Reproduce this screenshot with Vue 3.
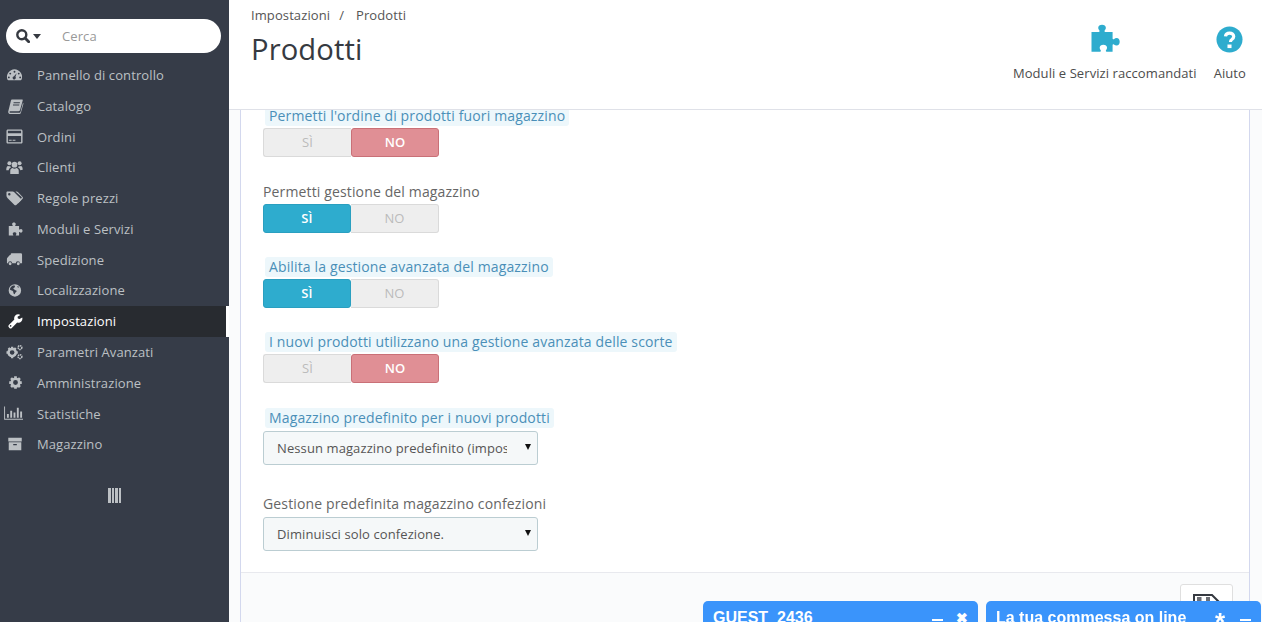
<script setup>
const menu = [
  { name: "Pannello di controllo", icon: "dash" },
  { name: "Catalogo", icon: "book" },
  { name: "Ordini", icon: "card" },
  { name: "Clienti", icon: "users" },
  { name: "Regole prezzi", icon: "tags" },
  { name: "Moduli e Servizi", icon: "puzzle" },
  { name: "Spedizione", icon: "truck" },
  { name: "Localizzazione", icon: "globe" },
  { name: "Impostazioni", icon: "wrench", active: true },
  { name: "Parametri Avanzati", icon: "cogs" },
  { name: "Amministrazione", icon: "cog" },
  { name: "Statistiche", icon: "chart" },
  { name: "Magazzino", icon: "archive" },
]

const fields = [
  { label: "Permetti l'ordine di prodotti fuori magazzino", hint: true, value: false },
  { label: "Permetti gestione del magazzino", value: true },
  { label: "Abilita la gestione avanzata del magazzino", hint: true, value: true },
  { label: "I nuovi prodotti utilizzano una gestione avanzata delle scorte", hint: true, value: false },
  { label: "Magazzino predefinito per i nuovi prodotti", hint: true, option: "Nessun magazzino predefinito (impostazione generale)" },
  { label: "Gestione predefinita magazzino confezioni", option: "Diminuisci solo confezione." },
]

const puzzle = "M2 6h5.500c.6 0 .8-.5.5-1-.5-.7-.9-1.300-.9-2.100C7.100 1.400 8.400.5 10 .5s2.900.9 2.900 2.400c0 .8-.4 1.400-.9 2.100-.3.5-.1 1 .5 1H18v5c0 .6.5.8 1 .5.600-.5 1.300-.9 2-.9 1.500 0 2.400 1.300 2.400 2.900s-.9 2.900-2.400 2.900c-.7 0-1.400-.4-2-.9-.5-.3-1-.1-1 .5V21h-4.500c-.6 0-.8-.5-.5-1 .5-.6.8-1.100.8-1.900 0-1.400-1.200-2.300-2.800-2.300s-2.800.9-2.800 2.300c0 .8.300 1.300.8 1.900.3.500.1 1-.5 1H2z"
</script>

<template>
  <div class="page">
    <aside class="sidebar">
      <div class="search">
        <svg class="search-icon" viewBox="0 0 14 14"><circle cx="5.800" cy="5.800" r="4.500" fill="none" stroke="#363a41" stroke-width="2.400" /><path d="M9 9l3.700 3.700" stroke="#363a41" stroke-width="2.800" stroke-linecap="round" /></svg>
        <span class="caret"></span>
        <input type="text" placeholder="Cerca" />
      </div>
      <nav class="menu">
        <a v-for="item in menu" :key="item.name" class="menu-item" :class="{ active: item.active }">
          <svg class="menu-icon" viewBox="0 0 18 18" fill="currentColor">
            <template v-if="item.icon === 'dash'">
              <path fill-rule="evenodd" d="M9 2.500a8 8 0 0 1 7.700 10.300c-.2.700-.5 1.200-1.200 1.200h-13c-.7 0-1-.5-1.200-1.200A8 8 0 0 1 9 2.500zM9 4a1 1 0 1 0 0 2 1 1 0 0 0 0-2zM4.500 6a1 1 0 1 0 0 2 1 1 0 0 0 0-2zM13.500 6a1 1 0 1 0 0 2 1 1 0 0 0 0-2zM3 10a1 1 0 1 0 0 2 1 1 0 0 0 0-2zM15 10a1 1 0 1 0 0 2 1 1 0 0 0 0-2zM11.300 6.500L8.500 9.800a1.700 1.700 0 1 0 1.500.6z" />
            </template>
            <template v-else-if="item.icon === 'book'">
              <path fill-rule="evenodd" d="M6.500 1.500H17c.6 0 .9.500.7 1.100l-2.800 10.200c-.2.700-.7 1.200-1.500 1.200H4.800c-.8 0-1.200.3-1 1 .1.400.5.500 1 .5h9.700c.4 0 .7-.2.800-.6l2.700-9.800c.4.300.5.8.4 1.300l-2.700 9.500c-.2.700-.8 1.100-1.500 1.100H4.800c-1.400 0-2.500-1-2.500-2.300 0-.4.100-.7.200-1L5.200 2.800c.2-.8.700-1.300 1.300-1.300zM8 4.500v1h6.500l.3-1zM7.400 7v1h6.500l.3-1z" />
            </template>
            <template v-else-if="item.icon === 'card'">
              <path fill-rule="evenodd" d="M2 1.500h14c.8 0 1.500.7 1.500 1.500v12c0 .8-.7 1.500-1.500 1.500H2c-.8 0-1.500-.7-1.500-1.500V3c0-.8.7-1.500 1.500-1.500zM2 3v2.500h14V3zM2 8.500V15h14V8.500zM3 12.500h3v1H3zM7 12.500h3v1H7z" />
            </template>
            <template v-else-if="item.icon === 'users'">
              <circle cx="9" cy="6" r="3" /><circle cx="3.600" cy="4.600" r="2.100" /><circle cx="14.400" cy="4.600" r="2.100" />
              <path d="M4.500 16v-3.500C4.500 10.500 6 9.500 7 9.500c.6.500 1.200.8 2 .8s1.400-.3 2-.8c1 0 2.500 1 2.500 3V16zM.3 11.500C.3 8.700 1 7.300 2.300 7.300c.4.300.8.500 1.300.5.400 0 .7-.1 1-.2.100.6.300 1 .6 1.400-1.200.5-2.200 1.500-2.300 3H.3zM17.700 11.500c0-2.800-.7-4.200-2-4.200-.4.300-.8.500-1.300.5-.4 0-.7-.1-1-.2-.1.600-.3 1-.6 1.400 1.200.5 2.200 1.500 2.300 3z" />
            </template>
            <template v-else-if="item.icon === 'tags'">
              <path fill-rule="evenodd" d="M.5 2.500C.5 2 1 1.500 1.500 1.500h5.600c.5 0 1 .2 1.400.5l7.200 7.200c.5.500.5 1.400 0 1.900l-4.800 4.800c-.5.500-1.400.5-1.900 0L1.800 8.700c-.8-.8-1.300-1.600-1.300-2.500zM3.500 3.300a1.300 1.300 0 1 0 0 2.600 1.300 1.300 0 0 0 0-2.600z" />
              <path d="M10 1.500h1.200c.5 0 1 .2 1.400.5l5 5.500c.5.500.5 1.200 0 1.700l-5 5-.9-.9 4.800-4.800c.4-.4.300-.9 0-1.200z" />
            </template>
            <template v-else-if="item.icon === 'puzzle'">
              <path transform="translate(1.600 1.200) scale(.68)" :d="puzzle" />
            </template>
            <template v-else-if="item.icon === 'truck'">
              <path d="M6 2.500h9.500c.8 0 1.500.5 1.500 1.300v9.200h-2.200a2.200 2.200 0 0 0-4.400 0H6.600a2.200 2.200 0 0 0-4.400 0H1V8.200c0-.4.200-.8.500-1.100l2.300-2.500c.3-.3.800-.5 1.200-.5V3.500c0-.6.400-1 1-1z" />
              <circle cx="4.400" cy="13.500" r="1.500" /><circle cx="13" cy="13.500" r="1.500" />
            </template>
            <template v-else-if="item.icon === 'globe'">
              <path transform="translate(1.500 1) scale(.88)" fill-rule="evenodd" d="M9 1.500a7.500 7.500 0 1 1 0 15 7.500 7.500 0 0 1 0-15zM6 3.500C4.500 4.500 3.300 6 3 8c1 .8 1.800 1.400 3 1.400 1 .7 1.300 1.500 1.200 3.100.6.700 1.200 1 1.800 1-.2-1.200.8-2.300 2-3.300.3-.9-.4-1.500-1.800-1.500-.6-1-1.500-1.300-2.200-1.700.4-.8 1.300-1.300 2-1.700V3.300C8.300 3 7 3 6 3.500zM12 4c-.4.700 0 1.300 1 1.500l1.300-.4C13.700 4.600 12.900 4.200 12 4z" />
            </template>
            <template v-else-if="item.icon === 'wrench'">
              <path transform="translate(2 .5) scale(.88)" fill-rule="evenodd" d="M12.400 1c1 0 1.900.3 2.600.8l-3.400 2 .4 2.200 2.100.8 3.100-1.900c.2.500.3 1 .3 1.500 0 2.700-2.100 4.800-4.700 4.800-.6 0-1.100-.1-1.600-.3l-6.500 6.500c-.8.800-2 .8-2.800 0l-.7-.8c-.8-.8-.8-2 0-2.800L7.800 7.400c-.2-.5-.3-1-.3-1.600C7.500 3.200 9.700 1 12.400 1zM3.300 14a1 1 0 1 0 0 2 1 1 0 0 0 0-2z" />
            </template>
            <template v-else-if="item.icon === 'cogs'">
              <circle cx="6.500" cy="9" r="3.800" fill="none" stroke="currentColor" stroke-width="2.600" />
              <path d="M5.300 2.800h2.400v2.400H5.300zM5.300 12.800h2.400v2.400H5.300zM.5 7.800h2.400v2.400H.5zM10.100 7.800h2.400v2.400h-2.400zM1.800 5.100l1.700-1.700 1.700 1.700-1.700 1.700zM7.800 11.100l1.700-1.700 1.700 1.700-1.700 1.700zM7.800 5.100l1.700-1.700 1.700 1.700-1.700 1.700zM1.800 11.100l1.700-1.700 1.700 1.700-1.700 1.700z" />
              <circle cx="14.800" cy="3.800" r="2" fill="none" stroke="currentColor" stroke-width="1.600" stroke-dasharray="1.500 .6" />
              <circle cx="14.800" cy="13.400" r="2" fill="none" stroke="currentColor" stroke-width="1.600" stroke-dasharray="1.500 .6" />
            </template>
            <template v-else-if="item.icon === 'cog'">
              <g transform="translate(1.500 .5) scale(.95)">
                <circle cx="9" cy="9" r="4.200" fill="none" stroke="currentColor" stroke-width="3" />
                <path d="M7.500 2h3v3h-3zM7.500 13h3v3h-3zM2 7.500h3v3H2zM13 7.500h3v3h-3zM3 5.100L5.100 3l2.100 2.100-2.100 2.100zM10.800 12.900l2.100-2.100 2.100 2.100-2.100 2.100zM10.800 5.100L12.900 3 15 5.100l-2.100 2.100zM3 12.900l2.100-2.100 2.100 2.100-2.100 2.100z" />
              </g>
            </template>
            <template v-else-if="item.icon === 'chart'">
              <path d="M-2 1.500h1v13h19v1H-2zM1 9.500h2v4H1zM4.500 6h2v7.500h-2zM8 8h2v5.500H8zM11.500 3h2v10.500h-2zM15 7h2v6.500h-2z" />
            </template>
            <template v-else>
              <path transform="translate(1 0) scale(.95)" fill-rule="evenodd" d="M1.500 2h15v4h-15zM2 7h14v9H2zM7 9v1.300h4V9z" />
            </template>
          </svg>
          <span>{{ item.name }}</span>
        </a>
      </nav>
      <div class="collapse"><i></i><i></i><i></i><i></i></div>
    </aside>

    <main class="main">
      <header class="head">
        <div class="head-left">
          <div class="crumbs"><span>Impostazioni</span><span class="sep">/</span><span>Prodotti</span></div>
          <h1>Prodotti</h1>
        </div>
        <div class="tool">
          <svg class="tool-icon puzzle" viewBox="0 0 24 22" fill="#2eacce"><path :d="puzzle" transform="translate(-1 0)" /></svg>
          <span>Moduli e Servizi raccomandati</span>
        </div>
        <div class="tool help">
          <svg class="tool-icon" viewBox="0 0 28 28">
            <circle cx="14" cy="14" r="13.500" fill="#2eacce" />
            <path d="M9.800 10.800c.3-2.300 2-3.400 4.300-3.400 2.500 0 4.300 1.400 4.300 3.500 0 1.700-1 2.400-2 3.100-.8.500-1.300 1-1.300 2v.6" fill="none" stroke="#fff" stroke-width="3.300" />
            <path d="M11.900 19.200h4.200v3.700h-4.200z" fill="#fff" />
          </svg>
          <span>Aiuto</span>
        </div>
      </header>

      <div class="content">
        <section class="panel">
          <div class="form">
            <div v-for="field in fields" :key="field.label" class="group">
              <label :class="{ hint: field.hint }"><span>{{ field.label }}</span></label>
              <div v-if="field.option" class="select-wrap">
                <select><option>{{ field.option }}</option></select>
              </div>
              <div v-else class="switch">
                <span class="yes" :class="{ on: field.value }">SÌ</span>
                <span class="no" :class="{ on: !field.value }">NO</span>
              </div>
            </div>
          </div>
          <footer class="panel-foot">
            <button class="save">
              <svg viewBox="0 0 27 27" width="27" height="27">
                <path fill="#fff" stroke="#363a41" stroke-width="2" d="M1 1h18l7 7v18H1z" />
                <path fill="#6c6f76" d="M4 3h4.500v8H4zM13 3h4v8h-4z" />
                <path fill="#363a41" d="M3 11h16v2H3zM4 16h19v8H4z" />
              </svg>
            </button>
          </footer>
        </section>
      </div>
    </main>

    <div class="chats">
      <div class="chat">
        <span class="chat-title">GUEST_2436</span>
        <span class="chat-min"></span>
        <span class="chat-close">✖</span>
      </div>
      <div class="chat">
        <span class="chat-title">La tua commessa on line</span>
        <span class="chat-star">*</span>
        <span class="chat-min"></span>
      </div>
    </div>
  </div>
</template>

<style>
html, body { margin: 0; height: 100%; overflow: hidden; background: #fafbfc; }
</style>

<style scoped>
.page {
  display: flex;
  height: 622px;
  overflow: hidden;
  font-family: "Open Sans", sans-serif;
  font-size: 13px;
  letter-spacing: .1px;
  color: #555;
}

.sidebar {
  width: 229px;
  flex: none;
  background: #363c48;
  padding-top: 19px;
  box-sizing: border-box;
}
.search {
  display: flex;
  align-items: center;
  height: 34px;
  margin: 0 8px 0 6px;
  padding-left: 10px;
  background: #fff;
  border-radius: 17px;
}
.search-icon { width: 14px; height: 14px; flex: none; }
.caret {
  width: 0;
  height: 0;
  margin-left: 3px;
  border: 4.500px solid transparent;
  border-top: 5px solid #363a41;
  border-bottom: 0;
}
.search input {
  flex: 1;
  min-width: 0;
  margin-left: 19px;
  border: 0;
  outline: 0;
  background: transparent;
  font: 13px "Open Sans", sans-serif;
  letter-spacing: .1px;
}
.search input::placeholder { color: #999; opacity: 1; }

.menu { margin-top: 6.750px; }
.menu-item {
  display: flex;
  align-items: center;
  height: 30.770px;
  color: #bcc0c4;
  padding-left: 37px;
  position: relative;
}
.menu-icon {
  position: absolute;
  left: 6px;
  top: 7px;
  width: 17px;
  height: 17px;
  color: #bcc0c4;
  overflow: visible;
}
.menu-item.active {
  background: #282b30;
  color: #fff;
  box-shadow: inset -3px 0 0 #fff;
}
.menu-item.active .menu-icon { color: #fff; }

.collapse {
  display: flex;
  justify-content: center;
  gap: 1px;
  margin-top: 28px;
  height: 15px;
}
.collapse i { width: 2.500px; background: #bcc0c4; }

.main {
  flex: 1;
  min-width: 0;
  display: flex;
  flex-direction: column;
}
.head {
  flex: none;
  height: 109px;
  display: flex;
  align-items: flex-start;
  background: #fff;
  border-bottom: 1px solid #dfe1e8;
  color: #4c4c4c;
}
.head-left { flex: 1; padding: 7px 0 0 22px; }
.crumbs { line-height: 17px; color: #555; }
.sep { margin: 0 12px 0 9px; }
h1 {
  margin: 5px 0 0;
  font-size: 29.200px;
  font-weight: 400;
  line-height: 40px;
  color: #363a41;
}
.tool {
  display: flex;
  flex-direction: column;
  align-items: center;
  padding-top: 24px;
  margin-right: 17px;
  white-space: nowrap;
  letter-spacing: .08px;
}
.tool.help { margin-right: 16px; }
.tool-icon { width: 27px; height: 27px; margin: 2px 0 11px; }
.tool-icon.puzzle { width: 32px; height: 29px; margin: 0 0 11px 2px; }

.content {
  flex: 1;
  min-height: 0;
  overflow: hidden;
  padding: 0 12px 0 11px;
}
.panel {
  background: #fff;
  border-left: 1px solid #d3d8ee;
  border-right: 1px solid #d3d8ee;
  margin-top: -3.800px;
}
.form { padding: 0 22px 4px; }
.group { display: flow-root; margin-bottom: 24.400px; }
.group label {
  display: block;
  font-size: 14px;
  letter-spacing: .14px;
  line-height: 20px;
  margin-bottom: 2px;
  color: #666;
}
.group label.hint span {
  display: inline-block;
  margin-left: 2px;
  padding: 0 4px;
  background: #edf7fb;
  border-radius: 3px;
  color: #4a8fb8;
}
.switch {
  display: flex;
  width: 176px;
  height: 29px;
  font-size: 13px;
  line-height: 27px;
  text-align: center;
}
.switch span {
  flex: none;
  width: 88px;
  box-sizing: border-box;
  background: #eee;
  color: #bbb;
  border: 1.500px solid #dadada;
}
.yes { border-radius: 3px 0 0 3px; }
.no { border-radius: 0 3px 3px 0; }
.yes { border-right: 0 !important; }
.no { border-left: 0 !important; }
.switch .yes.on {
  background: #2eacce;
  border: 1px solid #2a9fc0 !important;
  border-radius: 3px;
  color: #fff;
  font-weight: 600;
}
.switch .no.on {
  background: #e08f95;
  border: 1px solid #c97077 !important;
  border-radius: 3px;
  color: #fff;
  font-weight: 600;
}
.select-wrap {
  position: relative;
  width: 275px;
  height: 34px;
  margin: 3px 0 4.500px;
}
.select-wrap::after {
  content: "";
  position: absolute;
  right: 7px;
  top: 13px;
  border: 3.500px solid transparent;
  border-top: 6px solid #111;
  border-bottom: 0;
}
select {
  appearance: none;
  display: block;
  width: 275px;
  height: 34px;
  padding: 0 30px 0 13px;
  background: #f5f8f9;
  border: 1px solid #bbcdd2;
  border-radius: 3px;
  font: 13px "Open Sans", sans-serif;
  letter-spacing: .1px;
  color: #555;
  outline: 0;
}
.group:last-child { margin-bottom: 0; }
.panel-foot {
  display: flex;
  justify-content: flex-end;
  height: 80px;
  padding: 11px 16px 0 0;
  margin-top: 12.500px;
  background: #fafbfc;
  border-top: 1px solid #e8e9ee;
}
.save {
  width: 53px;
  height: 60px;
  padding: 9px 0 0;
  background: #fff;
  border: 1px solid #dfdfdf;
  border-radius: 3px;
  display: flex;
  justify-content: center;
  align-items: flex-start;
}

.chats {
  position: fixed;
  right: 1px;
  bottom: 0;
  display: flex;
  gap: 8px;
}
.chat {
  position: relative;
  width: 275px;
  height: 21px;
  box-sizing: border-box;
  display: flex;
  align-items: flex-start;
  padding: 7px 10px 0;
  background: #3a94fb;
  border-radius: 5px 5px 0 0;
  color: #fff;
  font: bold 16px/20px "Liberation Sans", sans-serif;
  letter-spacing: 0;
  overflow: hidden;
}
.chat-title { flex: 1; }
.chat-min {
  flex: none;
  width: 11px;
  height: 2px;
  margin-top: 11px;
  background: #fff;
}
.chat-close {
  flex: none;
  margin-left: 13px;
  width: 12px;
  font-size: 14px;
}
.chat-star {
  flex: none;
  margin-right: 13px;
  font-size: 26px;
  line-height: 28px;
  width: 12px;
}
</style>
